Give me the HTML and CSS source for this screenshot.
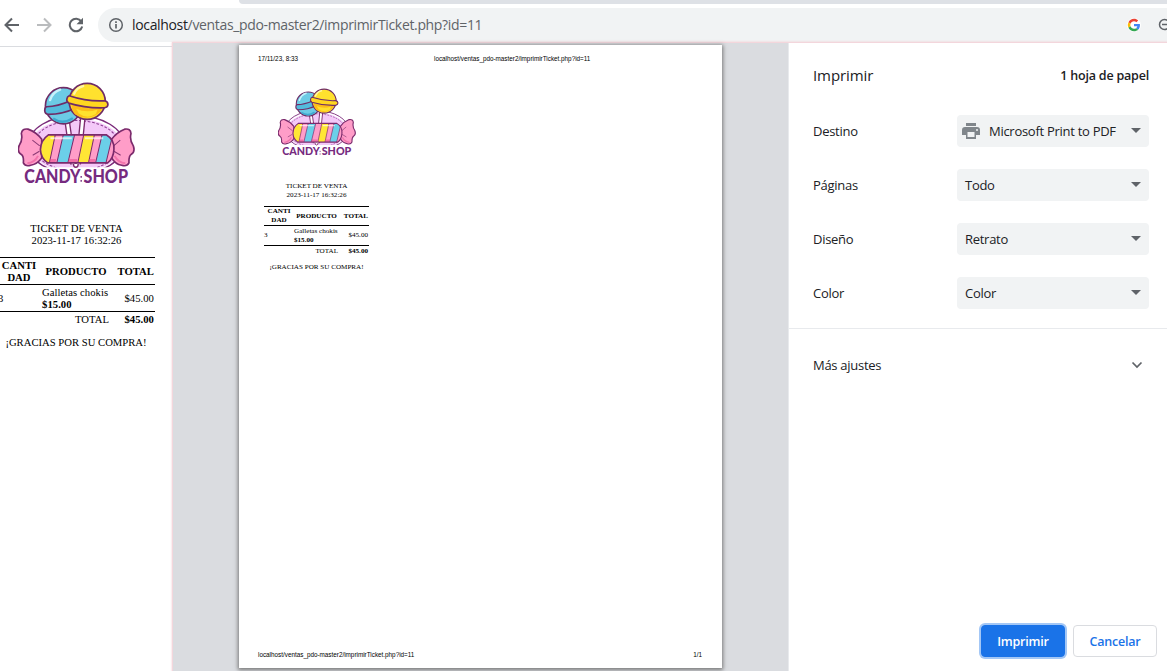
FILE: index.html
```html
<!DOCTYPE html>
<html lang="es">
<head>
<meta charset="utf-8">
<title>Imprimir ticket</title>
<link rel="stylesheet" href="styles.css">
</head>
<body>
<svg class="defs" aria-hidden="true">
  <symbol id="candy-logo" viewBox="54 34 350 308">
    <ellipse cx="228" cy="222" rx="143" ry="87" fill="#fff" stroke="#7b2a7b" stroke-width="4"/>
    <ellipse cx="228" cy="224" rx="136" ry="80" fill="#f4c9f8"/>
    <ellipse cx="228" cy="224" rx="128" ry="75" fill="none" stroke="#8c3d91" stroke-width="3" stroke-dasharray="8 5"/>
    <rect x="70" y="289" width="320" height="60" fill="#fff"/>
    <path d="M201 150l18 130" stroke="#7b2a6c" stroke-width="17"/>
    <path d="M201 150l18 130" stroke="#fff" stroke-width="9"/>
    <path d="M248 140l-14 140" stroke="#7b2a6c" stroke-width="17"/>
    <path d="M248 140l-14 140" stroke="#fff" stroke-width="9"/>
    <circle cx="190" cy="105" r="54" fill="#6ccbe5" stroke="#6f2c66" stroke-width="5"/>
    <path d="M150 88q8-24 30-31" fill="none" stroke="#c8f1fa" stroke-width="7" stroke-linecap="round"/>
    <path d="M159 143q28 20 59-1" fill="none" stroke="#3fa9cf" stroke-width="7"/>
    <path d="M139 108q34-1 72-18l16 22q-40 19-82 19q-11-2-11-12 0-9 5-11z" fill="#53bbdc" stroke="#6f2c66" stroke-width="5"/>
    <circle cx="261" cy="92" r="54" fill="#ffe12e" stroke="#6f2c66" stroke-width="5"/>
    <path d="M225 131q34 20 68-2 10-8 14-20-44 3-93-8 1 20 11 30z" fill="#fdbd18"/>
    <path d="M228 114q30 14 64 2l-5 14q-27 16-51-2z" fill="#ffe12e"/>
    <path d="M207 75q54 18 106 15 10 2 10 11 0 8-10 10-56 2-107-14-7-4-6-12 1-8 7-10z" fill="#ffd71f" stroke="#6f2c66" stroke-width="5"/>
    <path d="M222 69q8-19 27-23" fill="none" stroke="#fff6a8" stroke-width="7" stroke-linecap="round"/>
    <path d="M125 205Q109 184 84 175 66 172 64 188 69 208 57 225 51 243 63 250 72 255 70 276 76 288 92 283 112 280 125 261z" fill="#ff9dc8" stroke="#7b2a6c" stroke-width="5"/>
    <path d="M334 205Q350 184 373 175 391 172 392 188 387 208 399 225 405 243 393 250 385 255 386 276 380 288 364 283 345 280 334 261z" fill="#ff9dc8" stroke="#7b2a6c" stroke-width="5"/>
    <path d="M82 277q21-1 32-22M375 277q-21-1-32-22" fill="none" stroke="#f174ac" stroke-width="6"/>
    <path d="M97 208l22 17M98 253l20-12M360 208l-20 17M361 253l-20-12" fill="none" stroke="#8b3a75" stroke-width="3"/>
    <clipPath id="wrapper"><path d="M145 192H318Q343 207 341 235 340 262 322 276H143Q122 262 121 236 122 208 145 192z"/></clipPath>
    <g clip-path="url(#wrapper)">
      <path d="M110 185h250v100H110z" fill="#ff9dc8"/>
      <path d="M134 185h33l-21 100h-33z" fill="#ffe635"/>
      <path d="M191 185h34l-24 100h-33z" fill="#6bcfe9"/>
      <path d="M252 185h32l-21 100h-32z" fill="#ffe635"/>
      <path d="M307 185h32l-24 100h-31z" fill="#6bcfe9"/>
      <path d="M167 185l-21 100M191 185l-23 100M225 185l-24 100M252 185l-21 100M284 185l-21 100M307 185l-23 100M339 185l-24 100" stroke="#7b2a6c" stroke-width="3"/>
      <path d="M151 264h17l-2 14h-18zM206 264h26l-3 14h-26zM267 264h19l-3 14h-19z" fill="#e5488d" opacity=".55"/>
      <path d="M151 202h64M254 202h55" stroke="#fff" stroke-width="6" opacity=".65"/>
    </g>
    <path d="M145 192H318Q343 207 341 235 340 262 322 276H143Q122 262 121 236 122 208 145 192z" fill="none" stroke="#7b2a6c" stroke-width="5"/>
    <path d="M220 279q0 10 7 10t7-10" fill="#fff" stroke="#7b2a6c" stroke-width="4"/>
    <g class="wordmark">
      <text x="73" y="336" textLength="168" lengthAdjust="spacingAndGlyphs">CANDY</text>
      <text x="250" y="336" textLength="133" lengthAdjust="spacingAndGlyphs">SHOP</text>
    </g>
    <path d="M243 315v5M243 327v5" stroke="#762b7f" stroke-width="4"/>
  </symbol>
</svg>

<div class="browser">
  <div class="tabstrip"></div>
  <div class="toolbar">
    <svg class="nav" viewBox="0 0 16 16"><path d="M15 8H2M8 1.500L1.500 8 8 14.500" fill="none" stroke="#5f6368" stroke-width="2"/></svg>
    <svg class="nav" viewBox="0 0 16 16"><path d="M1 8h13M8 1.500L14.500 8 8 14.500" fill="none" stroke="#babcbe" stroke-width="2"/></svg>
    <svg class="nav" viewBox="0 0 16 16"><path d="M13.300 4.400A6.300 6.300 0 1 0 14.200 9.500" fill="none" stroke="#5f6368" stroke-width="2"/><path d="M15 .8v6.500H8.500z" fill="#5f6368"/></svg>
    <div class="omnibox">
      <svg class="info" viewBox="0 0 16 16"><circle cx="8" cy="8" r="6.300" fill="none" stroke="#5f6368" stroke-width="1.500"/><path d="M8 7v4.500M8 4.300V6" stroke="#5f6368" stroke-width="1.700"/></svg>
      <span class="url"><b>localhost</b>/ventas_pdo-master2/imprimirTicket.php?id=11</span>
      <svg class="google" viewBox="-3 -3 54 54"><circle cx="24" cy="24" r="27" fill="#fff"/><path fill="#ea4335" d="M24 9.500c3.500 0 6.700 1.200 9.200 3.600l6.900-6.900C35.900 2.400 30.500 0 24 0 14.600 0 6.500 5.400 2.600 13.200l8 6.200C12.400 13.700 17.700 9.500 24 9.500z"/><path fill="#4285f4" d="M47 24.500c0-1.600-.2-3.100-.4-4.500H24v9h12.900c-.6 3-2.300 5.500-4.800 7.200l7.700 6C44.400 38 47 31.800 47 24.500z"/><path fill="#fbbc05" d="M10.500 28.600a14.500 14.500 0 0 1 0-9.200l-8-6.200a24 24 0 0 0 0 21.600z"/><path fill="#34a853" d="M24 48c6.500 0 11.900-2.100 15.900-5.800l-7.700-6c-2.200 1.500-4.900 2.300-8.200 2.300-6.300 0-11.600-4.200-13.500-9.900l-8 6.200C6.500 42.600 14.600 48 24 48z"/></svg>
      <svg class="zoom" viewBox="0 0 16 16"><path d="M4 6.500h5M10.500 10.500L15 15" stroke="#5f6368" stroke-width="1.600"/><circle cx="6.500" cy="6.500" r="5" fill="none" stroke="#5f6368" stroke-width="1.500"/></svg>
    </div>
  </div>

  <main class="page">
    <section class="ticket ticket-screen">
      <svg class="logo"><use href="#candy-logo"/></svg>
      <p class="heading">TICKET DE VENTA<br>2023-11-17 16:32:26</p>
      <div class="table">
        <div class="row head"><b>CANTI<br>DAD</b><b>PRODUCTO</b><b>TOTAL</b></div>
        <div class="row item"><span>3</span><span>Galletas chokis<br><b>$15.00</b></span><span>$45.00</span></div>
        <div class="row sum"><span></span><span>TOTAL</span><b>$45.00</b></div>
      </div>
      <p class="thanks">¡GRACIAS POR SU COMPRA!</p>
    </section>
  </main>

  <div class="dialog">
    <div class="preview">
      <div class="sheet">
        <div class="sheet-top"><span>17/11/23, 8:33</span><span>localhost/ventas_pdo-master2/imprimirTicket.php?id=11</span></div>
        <section class="ticket ticket-print">
          <svg class="logo"><use href="#candy-logo"/></svg>
          <p class="heading">TICKET DE VENTA<br>2023-11-17 16:32:26</p>
          <div class="table">
            <div class="row head"><b>CANTI<br>DAD</b><b>PRODUCTO</b><b>TOTAL</b></div>
            <div class="row item"><span>3</span><span>Galletas chokis<br><b>$15.00</b></span><span>$45.00</span></div>
            <div class="row sum"><span></span><span>TOTAL</span><b>$45.00</b></div>
          </div>
          <p class="thanks">¡GRACIAS POR SU COMPRA!</p>
        </section>
        <div class="sheet-bottom"><span>localhost/ventas_pdo-master2/imprimirTicket.php?id=11</span><span>1/1</span></div>
      </div>
    </div>
    <aside class="settings">
      <header><h1>Imprimir</h1><span class="count">1 hoja de papel</span></header>
      <div class="options">
        <div class="option"><label>Destino</label><div class="select"><svg class="printer" viewBox="0 0 18 16"><path d="M4 0h10v3H4zM3 4h12q3 0 3 3v5h-4v4H4v-4H0V7q0-3 3-3z" fill="#80868b"/><path d="M5.500 9h7v5h-7z" fill="#f1f3f4"/><circle cx="15" cy="7" r="1" fill="#f1f3f4"/></svg><span class="destination">Microsoft Print to PDF</span><i></i></div></div>
        <div class="option"><label>Páginas</label><div class="select"><span>Todo</span><i></i></div></div>
        <div class="option"><label>Diseño</label><div class="select"><span>Retrato</span><i></i></div></div>
        <div class="option"><label>Color</label><div class="select"><span>Color</span><i></i></div></div>
      </div>
      <div class="more"><span>Más ajustes</span><svg viewBox="0 0 12 8"><path d="M1.500 1.500L6 6l4.500-4.500" fill="none" stroke="#5f6368" stroke-width="1.700"/></svg></div>
      <footer><button class="primary">Imprimir</button><button>Cancelar</button></footer>
    </aside>
  </div>
</div>
</body>
</html>
```

FILE: styles.css
```css
* { box-sizing: border-box; }
body { margin: 0; background: #fff; font-family: "Open Sans", "Noto Sans", sans-serif; color: #202124; }
p, h1 { margin: 0; }
.defs { position: absolute; width: 0; height: 0; }
.browser { position: relative; width: 1167px; height: 671px; overflow: hidden; }
.tabstrip { height: 4px; margin-left: 239px; background: #dee1e6; border-bottom-left-radius: 5px; }
.toolbar { display: flex; align-items: center; height: 43px; padding: 0 0 1px 4px; border-bottom: 1px solid #dadce0; }
.nav { flex: none; width: 16px; height: 16px; margin-right: 16px; }
.nav:nth-child(3) { margin-right: 14px; }
.omnibox { display: flex; align-items: center; flex: none; width: 1090px; height: 34px; padding-left: 10px; background: #f1f3f4; border-radius: 17px; }
.info { flex: none; width: 16px; height: 16px; margin-right: 8px; }
.url { flex: none; width: 995px; font-size: 14px; letter-spacing: -.34px; color: #5f6368; white-space: nowrap; }
.url b { font-weight: 400; color: #202124; }
.google { flex: none; width: 14px; height: 14px; margin-right: 17px; }
.zoom { flex: none; width: 16px; height: 16px; margin-top: 2px; }

.ticket { display: flex; flex-direction: column; color: #000; font-family: "Liberation Serif", serif; white-space: nowrap; }
.logo { flex: none; display: block; }
.wordmark { font: 900 54px Lato, sans-serif; fill: #762b7f; stroke: #fff; stroke-width: 8px; stroke-linejoin: round; paint-order: stroke; }
.heading, .thanks { text-align: center; }
.row { display: grid; align-items: center; border-top: 1px solid #000; }
.head b { text-align: center; }
.row > :last-child, .sum > :nth-child(2) { text-align: right; }

.ticket-screen { width: 157px; margin-left: -2px; padding-top: 35px; font-size: 10.670px; line-height: 12px; }
.ticket-screen .logo { width: 117px; height: 103px; margin-left: 20px; }
.ticket-screen .heading { margin-top: 37px; height: 35px; }
.ticket-screen .row { grid-template-columns: 42px 71px 44px; height: 27px; letter-spacing: .05px; }
.ticket-screen .row > :nth-child(2) { padding: 0 2px; }
.ticket-screen .row > :last-child { padding-right: 1px; }
.ticket-screen .head > :nth-child(2) { padding: 0 0 0 1px; }
.ticket-screen .sum { height: 15px; }
.ticket-screen .sum > * { line-height: 13px; }
.ticket-screen .thanks { margin-top: 10px; padding-right: 1px; }

.dialog { position: absolute; left: 172px; top: 42px; width: 996px; height: 640px; display: flex; border: 1px solid #f3d6dc; background: #fff; box-shadow: 0 0 2px #f1c9d0; }
.preview { width: 616px; padding: 2px 0 0 66px; background: #dadce0; border-right: 1px solid #e8eaed; }
.sheet { display: flex; flex-direction: column; width: 483px; height: 623px; padding: 10px 20px 9px 19px; background: #fff; box-shadow: 0 1px 4px 1px #777; font: 6.330px/8px "Liberation Sans", sans-serif; color: #000; }
.sheet-top, .sheet-bottom { display: flex; white-space: nowrap; }
.sheet-top span:first-child { width: 176px; }
.sheet-bottom { justify-content: space-between; margin-top: auto; }
.ticket-print { width: 105px; margin-left: 6px; padding-top: 25px; font-size: 7.110px; line-height: 9px; }
.ticket-print .logo { width: 78px; height: 69px; margin-left: 13.500px; }
.ticket-print .heading { margin-top: 25px; height: 24px; }
.ticket-print .row { grid-template-columns: 29px 46px 29px; height: 20px; }
.ticket-print .row > :nth-child(2) { padding-left: 1px; }
.ticket-print .head > :first-child { padding-left: 1px; }
.ticket-print .head { height: 19px; }
.ticket-print .sum { height: 12px; }
.ticket-print .sum > :nth-child(2) { padding-right: 1px; }
.ticket-print .thanks { margin-top: 6px; }

.settings { flex: 1; display: flex; flex-direction: column; font-size: 13px; letter-spacing: -.28px; }
.settings header { display: flex; align-items: center; justify-content: space-between; height: 66px; padding: 0 18px 2px 24px; }
h1 { font-size: 15px; font-weight: 400; letter-spacing: -.1px; }
.count { font-size: 12.500px; font-weight: 600; letter-spacing: -.2px; }
.options { display: flex; flex-direction: column; gap: 22px; height: 220px; padding: 6px 18px 0 24px; border-bottom: 1px solid #e8eaed; }
.option { display: flex; align-items: center; justify-content: space-between; height: 32px; }
.select { display: flex; align-items: center; width: 192px; height: 32px; padding: 0 8px; background: #f1f3f4; border-radius: 4px; }
.select i { margin: -1px 0 0 auto; border: 5px solid transparent; border-top-color: #5f6368; border-bottom: 0; }
.printer { width: 18px; height: 16px; margin: 0 9px 0 -3px; }
.more { display: flex; align-items: center; justify-content: space-between; height: 72px; padding: 0 24px; }
.more svg { width: 12px; height: 8px; }
.settings footer { display: flex; justify-content: flex-end; gap: 8px; margin-top: 224px; padding-right: 10px; }
button { width: 84px; height: 32px; padding: 0; border: 1px solid #dadce0; border-radius: 4px; background: #fff; color: #1a73e8; font: 600 12.500px "Open Sans", sans-serif; letter-spacing: -.2px; }
.primary { border-color: #1a73e8; background: #1a73e8; color: #fff; box-shadow: 0 0 0 2px #a3c7f6; }
```
